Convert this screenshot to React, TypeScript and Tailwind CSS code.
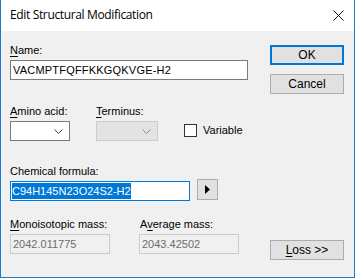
import React from "react";

const Chevron = ({ color }: { color: string }) => (
  <svg width="9" height="5" viewBox="0 0 9 5" className="block">
    <polyline points="0.5,0.5 4.5,4.5 8.5,0.5" fill="none" stroke={color} strokeWidth="1" />
  </svg>
);

const Acc = ({ children }: { children: React.ReactNode }) => <span className="underline underline-offset-[2px]">{children}</span>;

export default function App() {
  return (
    <div className="w-[355px] h-[278px] flex flex-col bg-white font-['Liberation_Sans',Arial,sans-serif] text-[11px] leading-[14px] text-black select-none">
      {/* title bar */}
      <div className="h-[31px] shrink-0 flex items-start justify-between border-x border-[#1c7bd0] bg-white">
        <span className="ml-[9px] mt-[7px] font-['Open_Sans',sans-serif] text-[12px] leading-[16px] tracking-[-0.35px]">Edit Structural Modification</span>
        <svg width="11" height="11" viewBox="0 0 11 11" className="mt-[10px] mr-[10px]">
          <path d="M0.5 0.5 L10.5 10.5 M10.5 0.5 L0.5 10.5" stroke="#111" strokeWidth="1" />
        </svg>
      </div>

      {/* body */}
      <div className="flex-1 flex bg-[#f0f0f0] border-x border-b border-[#1c7bd0] pl-[9px]">
        <div className="w-[238px] flex flex-col">
          <label className="mt-[12px] mb-[3px] h-[14px]"><Acc>N</Acc>ame:</label>
          <div className="h-[20px] border border-[#7a7a7a] bg-white pl-[2px] flex items-center tracking-[0.2px]">VACMPTFQFFKKGQKVGE-H2</div>

          <div className="flex mt-[24px]">
            <div className="w-[60px] flex flex-col">
              <label className="mb-[3px] h-[14px]"><Acc>A</Acc>mino acid:</label>
              <div className="h-[20px] border border-[#7a7a7a] bg-white flex items-center justify-end pr-[6px]">
                <Chevron color="#444" />
              </div>
            </div>
            <div className="w-[62px] ml-[26px] flex flex-col">
              <label className="mb-[3px] h-[14px]"><Acc>T</Acc>erminus:</label>
              <div className="h-[20px] border border-[#cccccc] bg-[#e3e3e3] flex items-center justify-end pr-[6px]">
                <Chevron color="#8a8a8a" />
              </div>
            </div>
            <div className="ml-[26px] flex items-center self-end h-[20px] mb-[1px]">
              <span className="w-[13px] h-[13px] border border-[#333] bg-white" />
              <span className="ml-[6px]">Variable</span>
            </div>
          </div>

          <label className="mt-[23px] mb-[3px] h-[14px]">Chemical formula:</label>
          <div className="flex items-start">
            <div className="w-[180px] h-[20px] border border-[#0078d7] bg-white pl-[1px] flex items-center">
              <span className="bg-[#0078d7] text-white leading-[16px]">C94H145N23O24S2-H2</span>
            </div>
            <button className="ml-[7px] mt-[-2px] w-[21px] h-[21px] border border-[#adadad] bg-[#e1e1e1] flex items-center justify-center">
              <svg width="5" height="9" viewBox="0 0 5 9"><polygon points="0,0 5,4.5 0,9" fill="#000" /></svg>
            </button>
          </div>

          <div className="flex mt-[16px]">
            <div className="w-[100px] flex flex-col">
              <label className="mb-[3px] h-[14px]"><Acc>M</Acc>onoisotopic mass:</label>
              <div className="h-[20px] border border-[#cccccc] bg-[#f0f0f0] text-[#6d6d6d] pl-[2px] flex items-center">2042.011775</div>
            </div>
            <div className="w-[100px] ml-[29px] flex flex-col">
              <label className="mb-[3px] h-[14px] pl-[1px]">A<Acc>v</Acc>erage mass:</label>
              <div className="h-[20px] border border-[#cccccc] bg-[#f0f0f0] text-[#6d6d6d] pl-[2px] flex items-center">2043.42502</div>
            </div>
          </div>
        </div>

        <div className="w-[74px] ml-[22px] flex flex-col text-[12px]">
          <button className="mt-[14px] h-[20px] border-2 border-[#0078d7] bg-[#e1e1e1] flex items-center justify-center">OK</button>
          <button className="mt-[9px] h-[20px] border border-[#adadad] bg-[#e1e1e1] flex items-center justify-center">Cancel</button>
          <button className="mt-[146px] h-[20px] border border-[#adadad] bg-[#e1e1e1] flex items-center justify-center"><span><Acc>L</Acc>oss &gt;&gt;</span></button>
        </div>
      </div>
    </div>
  );
}
